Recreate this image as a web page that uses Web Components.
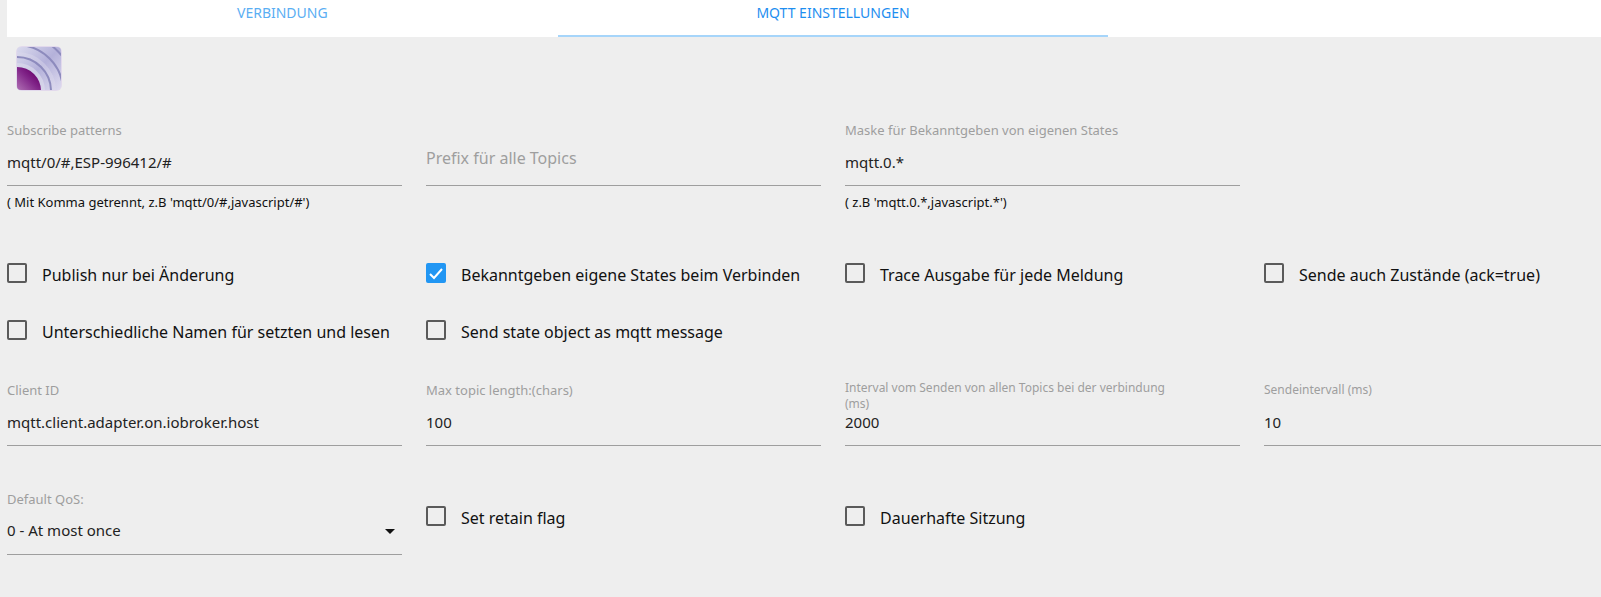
<!DOCTYPE html>
<html lang="de">
<head>
<meta charset="utf-8">
<title>MQTT Client</title>
<style>
  html {
    overflow-x: clip;
    background: #eee;
  }
  body {
    margin: 0 -58px 0 7px;
    font-family: "Noto Sans", "Open Sans", sans-serif;
    font-size: 16px;
    color: #111;
  }
</style>
</head>
<body>
<tab-bar>
  <tab-link href="#tab-main">Verbindung</tab-link>
  <tab-link href="#tab-mqtt" active>MQTT Einstellungen</tab-link>
</tab-bar>

<adapter-logo></adapter-logo>

<settings-row class="first">
  <text-field value="mqtt/0/#,ESP-996412/#">Subscribe patterns<span slot="hint">( Mit Komma getrennt, z.B 'mqtt/0/#,javascript/#')</span></text-field>
  <text-field value="">Prefix für alle Topics</text-field>
  <text-field value="mqtt.0.*">Maske für Bekanntgeben von eigenen States<span slot="hint">( z.B 'mqtt.0.*,javascript.*')</span></text-field>
</settings-row>

<settings-row class="checks">
  <check-box>Publish nur bei Änderung</check-box>
  <check-box checked>Bekanntgeben eigene States beim Verbinden</check-box>
  <check-box>Trace Ausgabe für jede Meldung</check-box>
  <check-box>Sende auch Zustände (ack=true)</check-box>
  <check-box>Unterschiedliche Namen für setzten und lesen</check-box>
  <check-box>Send state object as mqtt message</check-box>
</settings-row>

<settings-row class="limits">
  <text-field value="mqtt.client.adapter.on.iobroker.host">Client ID</text-field>
  <text-field value="100">Max topic length:(chars)</text-field>
  <text-field value="2000" small long>Interval vom Senden von allen Topics bei der verbindung (ms)</text-field>
  <text-field value="10" small>Sendeintervall (ms)</text-field>
</settings-row>

<settings-row class="session">
  <select-field options="0 - At most once|1 - At least once|2 - Exactly once">Default QoS:</select-field>
  <check-box beside>Set retain flag</check-box>
  <check-box beside>Dauerhafte Sitzung</check-box>
</settings-row>

<template id="tab-bar">
  <style>
    :host {
      display: grid;
      grid-template-columns: repeat(3, 1fr);
      background: #fff;
    }
  </style>
  <slot></slot>
</template>

<template id="tab-link">
  <style>
    :host {
      display: block;
    }
    a {
      display: block;
      padding-bottom: 9px;
      border-bottom: 2px solid transparent;
      color: #5aaef3;
      font-size: 14px;
      line-height: 26px;
      text-align: center;
      text-decoration: none;
      text-transform: uppercase;
    }
    :host([active]) a {
      color: #1e8ef0;
      border-color: #a6d5fa;
    }
  </style>
  <a><slot></slot></a>
</template>

<template id="adapter-logo">
  <style>
    :host {
      display: block;
      padding: 9px 9px 0;
    }
    svg {
      display: block;
    }
  </style>
  <svg width="46" height="45" viewBox="0 0 46 45" role="img" aria-label="MQTT">
    <defs>
      <linearGradient id="bg" x1="0" y1="0" x2="1" y2="1">
        <stop offset="0" stop-color="#dcdcee"/>
        <stop offset=".5" stop-color="#b4b1da"/>
        <stop offset="1" stop-color="#e0ddf0"/>
      </linearGradient>
      <linearGradient id="core" gradientUnits="userSpaceOnUse" x1="1" y1="44" x2="17" y2="28">
        <stop offset="0" stop-color="#b070b4"/>
        <stop offset=".7" stop-color="#82278a"/>
        <stop offset="1" stop-color="#720f76"/>
      </linearGradient>
      <clipPath id="clip"><rect x="1" y="1" width="44" height="43" rx="4"/></clipPath>
    </defs>
    <rect width="46" height="45" rx="6" fill="#e2d9ec"/>
    <g clip-path="url(#clip)">
      <rect width="46" height="45" fill="url(#bg)"/>
      <g fill="none">
        <circle cx="1" cy="45" r="26" stroke="#dedded" stroke-width="4" opacity=".6"/>
        <circle cx="1" cy="45" r="37" stroke="#dedded" stroke-width="4" opacity=".4"/>
        <circle cx="1" cy="45" r="34" stroke="#8d8bbd" stroke-width="2"/>
        <circle cx="1" cy="45" r="46" stroke="#8d8bbd" stroke-width="2"/>
        <circle cx="1" cy="45" r="57" stroke="#8d8bbd" stroke-width="2"/>
      </g>
      <circle cx="1" cy="45" r="24" fill="url(#core)"/>
    </g>
  </svg>
</template>

<template id="settings-row">
  <style>
    :host {
      display: grid;
      grid-template-columns: repeat(4, minmax(0, 1fr));
      gap: 33px 24px;
    }
    :host(.first) {
      margin-top: 29px;
    }
    :host(.checks) {
      margin-top: 51px;
    }
    :host(.limits) {
      margin-top: 36px;
    }
    :host(.session) {
      margin-top: 43px;
    }
  </style>
  <slot></slot>
</template>

<template id="text-field">
  <style>
    :host {
      display: grid;
      grid-template-rows: 20px 46px auto;
    }
    label {
      grid-area: 1 / 1;
      color: #9e9e9e;
      font-size: 13px;
      line-height: 20px;
    }
    :host([small]) label {
      font-size: 12px;
    }
    :host([long]) label {
      max-width: 85%;
      line-height: 16px;
    }
    /* the label lies in the input until there is a value */
    :host([value=""]) label {
      grid-area: 2 / 1;
      font-size: 16px;
      line-height: 36px;
    }
    input {
      grid-area: 2 / 1;
      box-sizing: border-box;
      width: 100%;
      margin: 0;
      padding: 0 0 2px;
      border: 0;
      border-bottom: 1px solid #9e9e9e;
      border-radius: 0;
      outline: 0;
      background: transparent;
      color: #222;
      font-family: inherit;
      font-size: 15px;
    }
    ::slotted([slot="hint"]) {
      grid-area: 3 / 1;
      margin-top: 6px;
      font-size: 13px;
      line-height: 20px;
    }
  </style>
  <label for="field"><slot></slot></label>
  <input type="text" id="field">
  <slot name="hint"></slot>
</template>

<template id="select-field">
  <style>
    :host {
      display: grid;
      grid-template-rows: 20px 46px;
    }
    label {
      color: #9e9e9e;
      font-size: 13px;
      line-height: 20px;
    }
    select, svg {
      grid-area: 2 / 1;
    }
    select {
      appearance: none;
      width: 100%;
      margin: 0;
      padding: 0 0 3px;
      border: 0;
      border-bottom: 1px solid #9e9e9e;
      border-radius: 0;
      outline: 0;
      background: transparent;
      color: #222;
      font-family: inherit;
      font-size: 15px;
    }
    svg {
      place-self: center end;
      margin: 0 7px 2px 0;
      pointer-events: none;
    }
  </style>
  <label for="field"><slot></slot></label>
  <select id="field"></select>
  <svg width="10" height="5" viewBox="0 0 10 5"><path d="M0 0h10L5 5z" fill="#111"/></svg>
</template>

<template id="check-box">
  <style>
    :host {
      display: block;
    }
    :host([beside]) {
      margin-top: 17px;
    }
    label {
      display: grid;
      grid-template-columns: 20px 1fr;
      column-gap: 15px;
      line-height: 24px;
      white-space: nowrap;
    }
    input, svg {
      grid-area: 1 / 1;
      width: 20px;
      height: 20px;
    }
    input {
      appearance: none;
      box-sizing: border-box;
      margin: 0;
      border: 2px solid #5a5a5a;
      border-radius: 2px;
    }
    input:checked {
      border-color: #2196f3;
      background: #2196f3;
    }
    svg {
      z-index: 1;
      visibility: hidden;
      pointer-events: none;
    }
    input:checked + svg {
      visibility: visible;
    }
  </style>
  <label>
    <input type="checkbox">
    <svg viewBox="0 0 20 20"><path d="M4 11l4 4 8-9" fill="none" stroke="#fff" stroke-width="2"/></svg>
    <span><slot></slot></span>
  </label>
</template>

<script>
class BaseElement extends HTMLElement {
  constructor() {
    super();
    this.attachShadow({ mode: "open" });
    const template = document.getElementById(this.localName);
    this.shadowRoot.appendChild(template.content.cloneNode(true));
  }
}

class TabBar extends BaseElement {}

class TabLink extends BaseElement {
  connectedCallback() {
    this.shadowRoot.querySelector("a").href = this.getAttribute("href");
  }
}

class AdapterLogo extends BaseElement {}

class SettingsRow extends BaseElement {}

class TextField extends BaseElement {
  connectedCallback() {
    const input = this.shadowRoot.querySelector("input");
    input.value = this.getAttribute("value");

    input.addEventListener("input", () => {
      this.setAttribute("value", input.value);
    });
  }
}

class SelectField extends BaseElement {
  connectedCallback() {
    const select = this.shadowRoot.querySelector("select");

    this.getAttribute("options").split("|").forEach((text, i) => {
      select.add(new Option(text, i));
    });
  }
}

class CheckBox extends BaseElement {
  connectedCallback() {
    this.shadowRoot.querySelector("input").checked = this.hasAttribute("checked");
  }
}

customElements.define("tab-bar", TabBar);
customElements.define("tab-link", TabLink);
customElements.define("adapter-logo", AdapterLogo);
customElements.define("settings-row", SettingsRow);
customElements.define("text-field", TextField);
customElements.define("select-field", SelectField);
customElements.define("check-box", CheckBox);
</script>
</body>
</html>
